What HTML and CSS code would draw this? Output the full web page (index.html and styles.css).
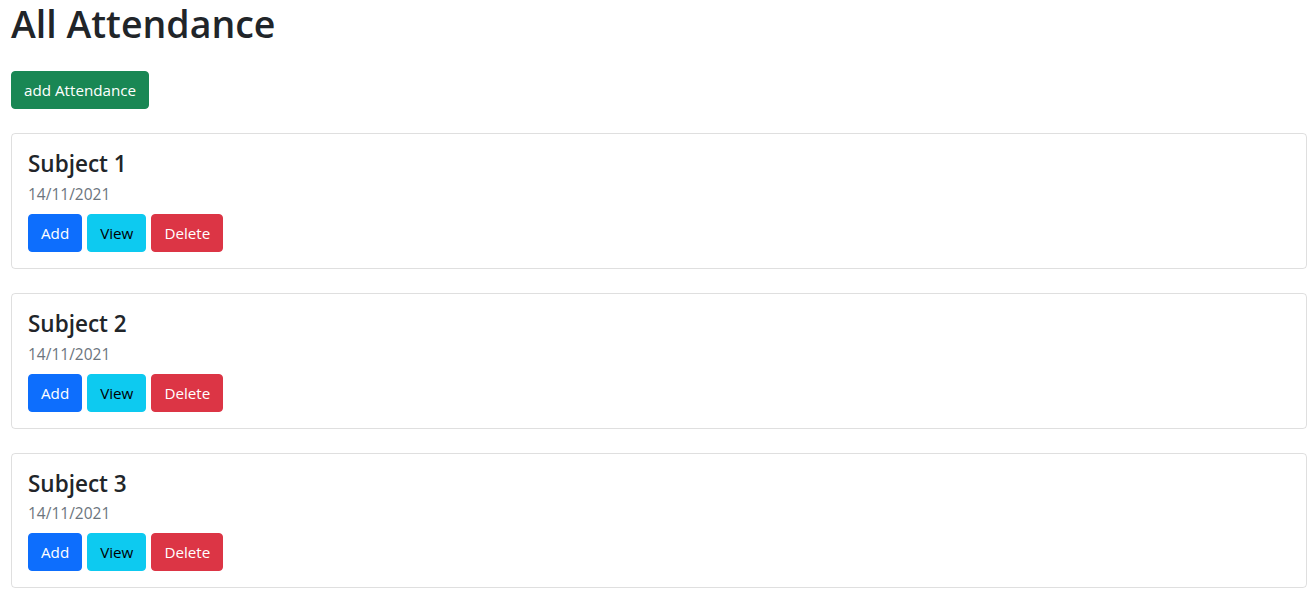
FILE: index.html
```html
<!DOCTYPE html>
<html lang="en">
<head>
<meta charset="utf-8">
<title>All Attendance</title>
<link rel="stylesheet" href="styles.css">
</head>
<body>
<main class="page">
  <h1 class="page-title">All Attendance</h1>
  <div class="toolbar">
    <button class="btn btn-success">add Attendance</button>
  </div>
  <div class="list">
    <section class="card">
      <h4 class="card-title">Subject 1</h4>
      <div class="card-subtitle">14/11/2021</div>
      <div class="actions">
        <button class="btn btn-primary">Add</button>
        <button class="btn btn-info">View</button>
        <button class="btn btn-danger">Delete</button>
      </div>
    </section>
    <section class="card">
      <h4 class="card-title">Subject 2</h4>
      <div class="card-subtitle">14/11/2021</div>
      <div class="actions">
        <button class="btn btn-primary">Add</button>
        <button class="btn btn-info">View</button>
        <button class="btn btn-danger">Delete</button>
      </div>
    </section>
    <section class="card">
      <h4 class="card-title">Subject 3</h4>
      <div class="card-subtitle">14/11/2021</div>
      <div class="actions">
        <button class="btn btn-primary">Add</button>
        <button class="btn btn-info">View</button>
        <button class="btn btn-danger">Delete</button>
      </div>
    </section>
  </div>
</main>
</body>
</html>
```
FILE: styles.css
```css
* { box-sizing: border-box; }
html, body { margin: 0; padding: 0; background: #fff; }
body {
  font-family: "Open Sans", "Noto Sans", sans-serif;
  color: #212529;
  font-size: 16px;
  line-height: 1.5;
}
.page { padding: 0 8px 0 11px; }
.page-title {
  margin: 0;
  font-size: 37.5px;
  line-height: 48px;
  font-weight: 600;
}
.toolbar { margin-top: 23px; display: flex; }
.list {
  margin-top: 24px;
  display: flex;
  flex-direction: column;
  gap: 24px;
}
.card {
  border: 1px solid rgba(0,0,0,.125);
  border-radius: 4px;
  padding: 16px;
}
.card-title {
  margin: 0;
  font-size: 22.5px;
  line-height: 28.8px;
  font-weight: 600;
}
.card-subtitle {
  color: #6c757d;
  margin-top: 3px;
  font-size: 15.5px;
  line-height: 24px;
}
.actions { display: flex; gap: 5px; margin-top: 8px; }
.btn {
  font-family: inherit;
  font-size: 15.2px;
  line-height: 24px;
  padding: 6px 12px;
  border: 1px solid transparent;
  border-radius: 4px;
  cursor: pointer;
}
.btn-success { background: #198754; border-color: #198754; color: #fff; }
.btn-primary { background: #0d6efd; border-color: #0d6efd; color: #fff; }
.btn-info { background: #0dcaf0; border-color: #0dcaf0; color: #000; }
.btn-danger { background: #dc3545; border-color: #dc3545; color: #fff; }
```
